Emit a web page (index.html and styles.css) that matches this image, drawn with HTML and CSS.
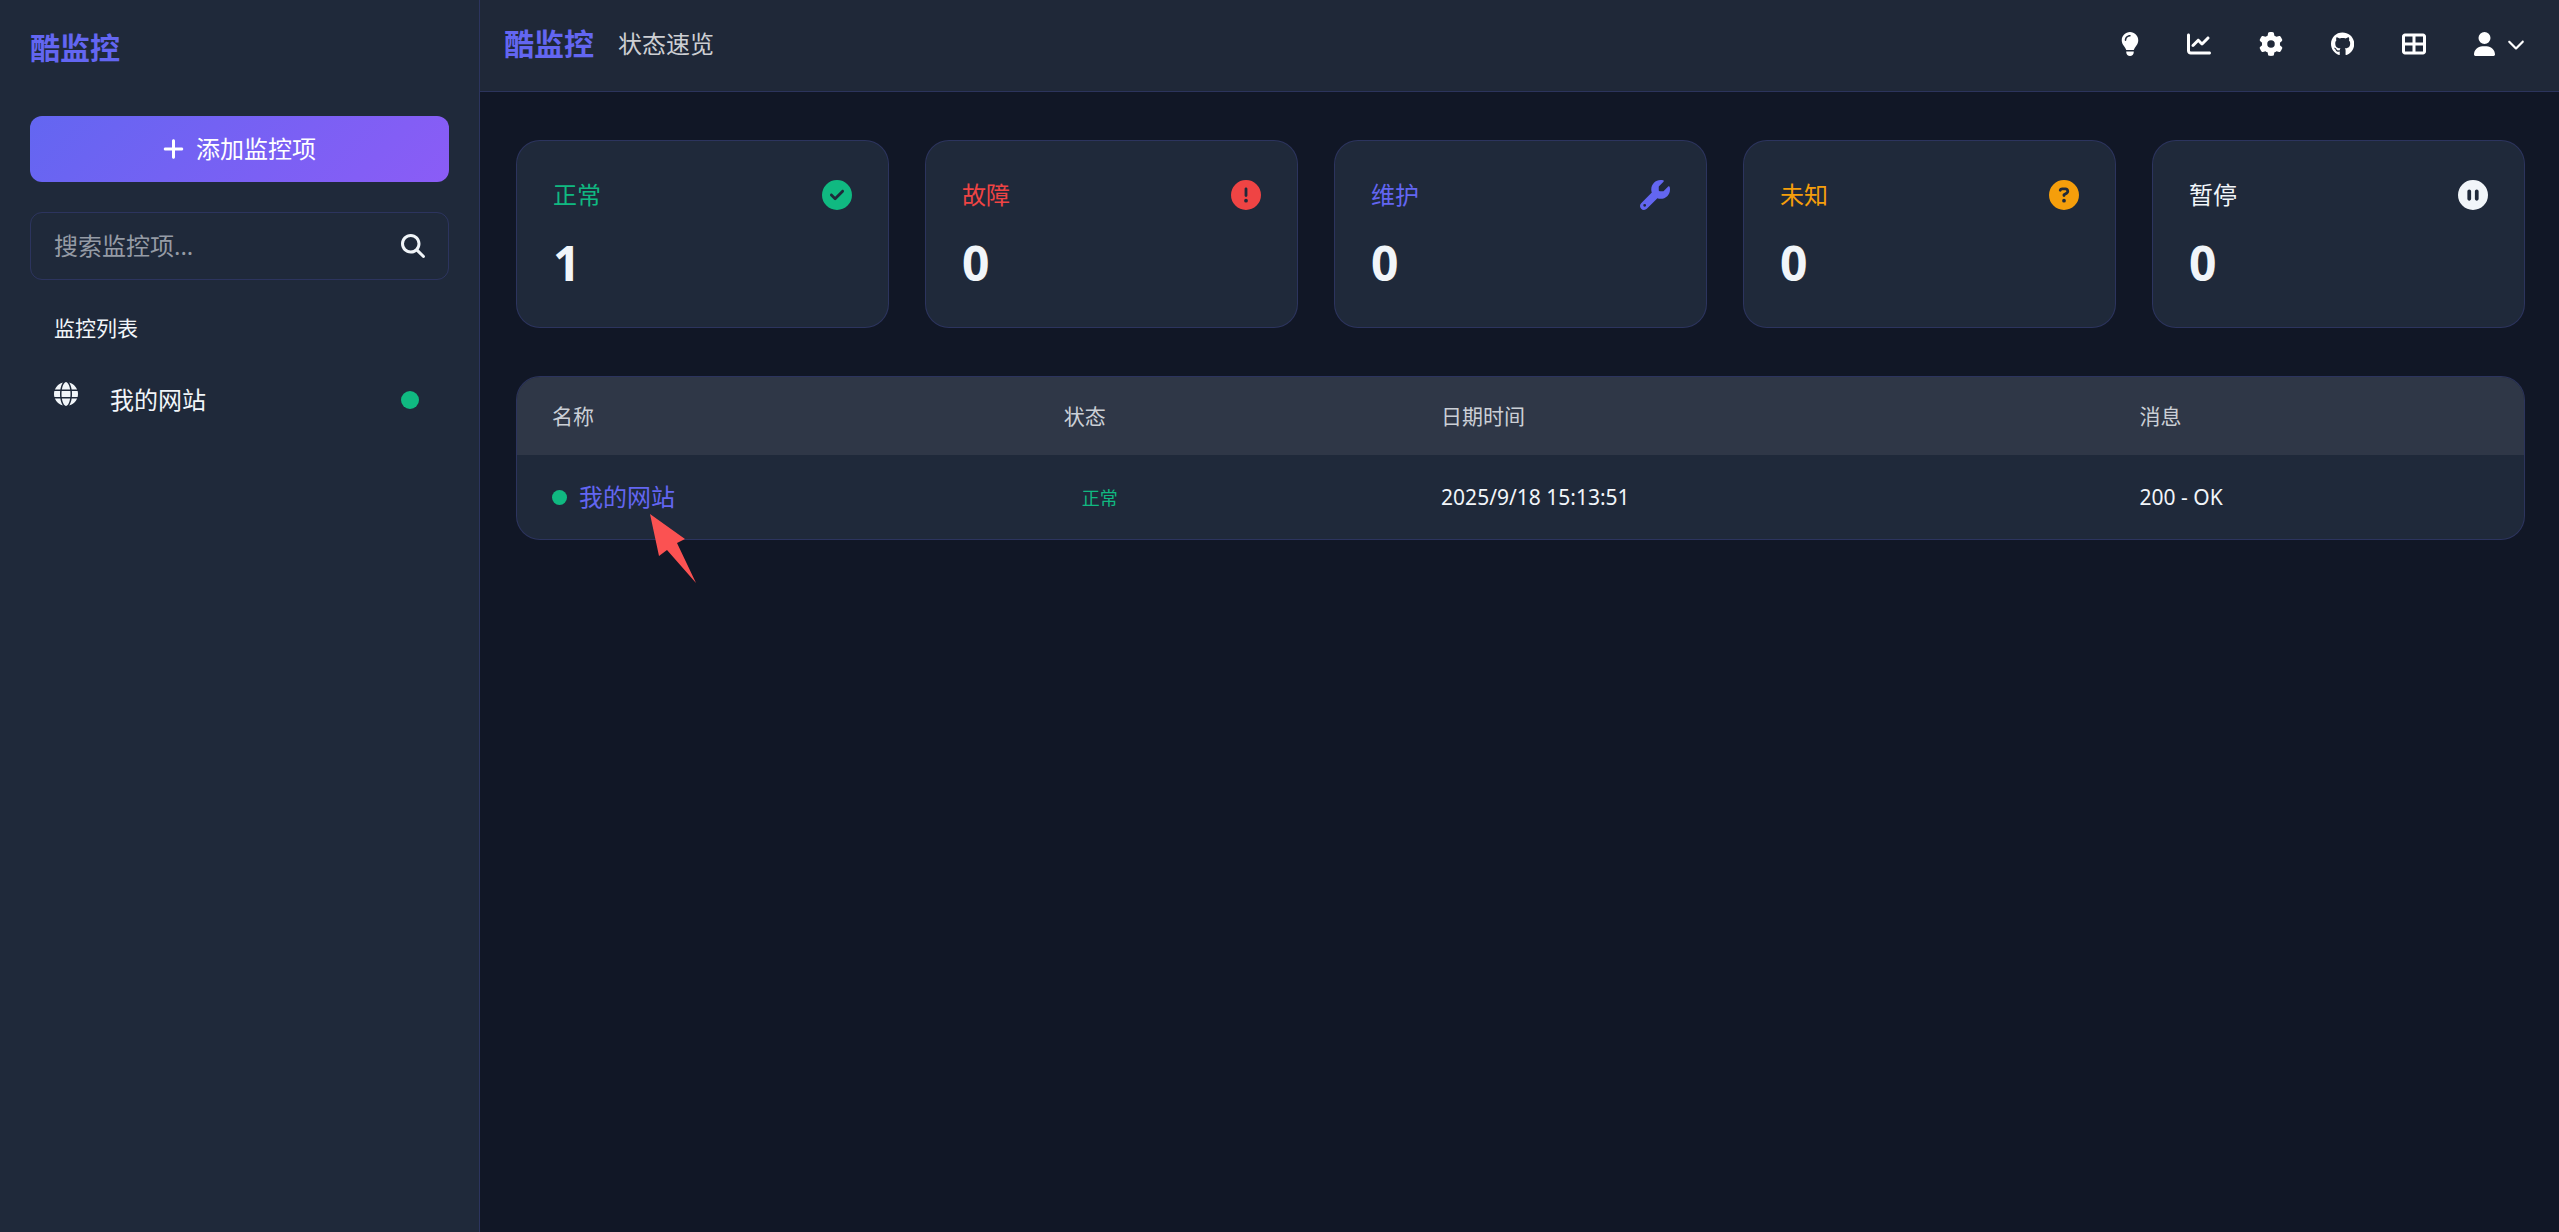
FILE: index.html
```html
<!DOCTYPE html>
<html lang="zh-CN">
<head>
<meta charset="utf-8">
<title>酷监控 - 状态速览</title>
<meta name="viewport" content="width=device-width, initial-scale=1">
<link rel="stylesheet" href="styles.css">
</head>
<body>
<div class="app">
  <aside class="sidebar">
    <a class="brand" href="#">酷监控</a>
    <button class="add-button" type="button">
      <svg class="icon icon-plus" viewBox="0 0 448 512" aria-hidden="true"><path d="M256 80c0-17.7-14.3-32-32-32s-32 14.3-32 32V224H48c-17.7 0-32 14.3-32 32s14.3 32 32 32H192V432c0 17.7 14.3 32 32 32s32-14.3 32-32V288H400c17.7 0 32-14.3 32-32s-14.3-32-32-32H256V80z"/></svg>
      <span>添加监控项</span>
    </button>
    <form class="search" role="search">
      <input class="search-input" type="text" placeholder="搜索监控项..." aria-label="搜索监控项">
      <button class="search-button" type="button" aria-label="搜索">
        <svg class="icon" viewBox="0 0 512 512" aria-hidden="true"><path d="M416 208c0 45.9-14.9 88.3-40 122.7L502.6 457.4c12.5 12.5 12.5 32.8 0 45.3s-32.8 12.5-45.3 0L330.7 376c-34.4 25.2-76.8 40-122.7 40C93.1 416 0 322.9 0 208S93.1 0 208 0S416 93.1 416 208zM208 352a144 144 0 1 0 0-288 144 144 0 1 0 0 288z"/></svg>
      </button>
    </form>
    <h2 class="list-title">监控列表</h2>
    <nav>
      <a class="monitor" href="#">
        <svg class="icon monitor-icon" viewBox="0 0 512 512" aria-hidden="true"><path d="M352 256c0 22.2-1.2 43.6-3.3 64H163.3c-2.2-20.4-3.3-41.8-3.3-64s1.2-43.6 3.3-64H348.7c2.2 20.4 3.3 41.8 3.3 64zm28.8-64H503.9c5.3 20.5 8.1 41.9 8.1 64s-2.8 43.5-8.1 64H380.8c2.1-20.6 3.2-42 3.2-64s-1.1-43.4-3.2-64zm112.6-32H376.7c-10-63.9-29.8-117.4-55.3-151.6c78.3 20.7 142 77.5 171.9 151.6zm-149.1 0H167.7c6.1-36.4 15.5-68.6 27-94.7c10.5-23.6 22.2-40.7 33.5-51.5C239.4 3.2 248.7 0 256 0s16.6 3.2 27.8 13.8c11.3 10.8 23 27.9 33.5 51.5c11.6 26 20.9 58.2 27 94.7zm-209 0H18.6C48.6 85.9 112.2 29.1 190.6 8.4C165.1 42.6 145.3 96.1 135.3 160zM8.1 192H131.2c-2.1 20.6-3.2 42-3.2 64s1.1 43.4 3.2 64H8.1C2.8 299.5 0 278.1 0 256s2.8-43.5 8.1-64zM194.7 446.6c-11.6-26-20.9-58.2-27-94.6H344.3c-6.1 36.4-15.5 68.6-27 94.6c-10.5 23.6-22.2 40.7-33.5 51.5C272.6 508.8 263.3 512 256 512s-16.6-3.2-27.8-13.8c-11.3-10.8-23-27.9-33.5-51.5zM135.3 352c10 63.9 29.8 117.4 55.3 151.6C112.2 482.9 48.6 426.1 18.6 352H135.3zm358.1 0c-30 74.1-93.6 130.9-171.9 151.6c25.5-34.2 45.2-87.7 55.3-151.6H493.4z"/></svg>
        <span class="monitor-name">我的网站</span>
        <span class="dot dot-large"></span>
      </a>
    </nav>
  </aside>

  <div class="page">
    <header class="topbar">
      <a class="brand" href="#">酷监控</a>
      <h1 class="page-title">状态速览</h1>
      <nav class="tools">
        <button class="tool" type="button" aria-label="切换主题"><svg class="icon" viewBox="0 0 384 512" aria-hidden="true"><path d="M272 384c9.6-31.9 29.5-59.1 49.2-86.2l0 0c5.2-7.1 10.4-14.2 15.4-21.4c19.8-28.5 31.4-63 31.4-100.3C368 78.8 289.2 0 192 0S16 78.8 16 176c0 37.3 11.6 71.9 31.4 100.3c5 7.2 10.2 14.3 15.4 21.4l0 0c19.8 27.1 39.7 54.4 49.2 86.2H272zM192 512c44.2 0 80-35.8 80-80V416H112v16c0 44.2 35.8 80 80 80zM112 176c0 8.8-7.2 16-16 16s-16-7.2-16-16c0-61.9 50.1-112 112-112c8.8 0 16 7.2 16 16s-7.2 16-16 16c-44.2 0-80 35.8-80 80z"/></svg></button>
        <a class="tool" href="#" aria-label="状态页"><svg class="icon" viewBox="0 0 512 512" aria-hidden="true"><path d="M64 64c0-17.7-14.3-32-32-32S0 46.3 0 64V400c0 44.2 35.8 80 80 80H480c17.7 0 32-14.3 32-32s-14.3-32-32-32H80c-8.8 0-16-7.2-16-16V64zm406.6 86.6c12.5-12.5 12.5-32.8 0-45.3s-32.8-12.5-45.3 0L320 210.7l-57.4-57.4c-12.5-12.5-32.8-12.5-45.3 0l-112 112c-12.5 12.5-12.5 32.8 0 45.3s32.8 12.5 45.3 0L240 221.3l57.4 57.4c12.5 12.5 32.8 12.5 45.3 0l128-128z"/></svg></a>
        <a class="tool" href="#" aria-label="设置"><svg class="icon" viewBox="0 0 512 512" aria-hidden="true"><path d="M495.9 166.6c3.2 8.7 .5 18.4-6.4 24.6l-43.3 39.4c1.1 8.3 1.7 16.8 1.7 25.4s-.6 17.1-1.7 25.4l43.3 39.4c6.9 6.2 9.6 15.9 6.4 24.6c-4.4 11.9-9.7 23.3-15.8 34.3l-4.7 8.1c-6.6 11-14 21.4-22.1 31.2c-5.9 7.2-15.7 9.6-24.5 6.8l-55.7-17.7c-13.4 10.3-28.2 18.9-44 25.4l-12.5 57.1c-2 9.1-9 16.3-18.2 17.8c-13.8 2.3-28 3.5-42.5 3.5s-28.7-1.2-42.5-3.5c-9.2-1.5-16.2-8.7-18.2-17.8l-12.5-57.1c-15.8-6.5-30.6-15.1-44-25.4L83.1 425.9c-8.8 2.8-18.6 .3-24.5-6.8c-8.1-9.8-15.5-20.2-22.1-31.2l-4.7-8.1c-6.1-11-11.4-22.4-15.8-34.3c-3.2-8.7-.5-18.4 6.4-24.6l43.3-39.4C64.6 273.1 64 264.6 64 256s.6-17.1 1.7-25.4L22.4 191.2c-6.9-6.2-9.6-15.9-6.4-24.6c4.4-11.9 9.7-23.3 15.8-34.3l4.7-8.1c6.6-11 14-21.4 22.1-31.2c5.9-7.2 15.7-9.6 24.5-6.8l55.7 17.7c13.4-10.3 28.2-18.9 44-25.4l12.5-57.1c2-9.1 9-16.3 18.2-17.8C227.3 1.2 241.5 0 256 0s28.7 1.2 42.5 3.5c9.2 1.5 16.2 8.7 18.2 17.8l12.5 57.1c15.8 6.5 30.6 15.1 44 25.4l55.7-17.7c8.8-2.8 18.6-.3 24.5 6.8c8.1 9.8 15.5 20.2 22.1 31.2l4.7 8.1c6.1 11 11.4 22.4 15.8 34.3zM256 336a80 80 0 1 0 0-160 80 80 0 1 0 0 160z"/></svg></a>
        <a class="tool" href="#" aria-label="GitHub"><svg class="icon" viewBox="0 0 496 512" aria-hidden="true"><path d="M165.9 397.4c0 2-2.3 3.6-5.2 3.6-3.3.3-5.6-1.3-5.6-3.6 0-2 2.3-3.6 5.2-3.6 3-.3 5.6 1.3 5.6 3.6zm-31.1-4.5c-.7 2 1.3 4.3 4.3 4.9 2.6 1 5.6 0 6.2-2s-1.3-4.3-4.3-5.2c-2.6-.7-5.5.3-6.2 2.3zm44.2-1.7c-2.9.7-4.9 2.6-4.6 4.9.3 2 2.9 3.3 5.9 2.6 2.9-.7 4.9-2.6 4.6-4.6-.3-1.9-3-3.2-5.9-2.9zM244.8 8C106.1 8 0 113.3 0 252c0 110.9 69.8 205.8 169.5 239.2 12.8 2.3 17.3-5.6 17.3-12.1 0-6.2-.3-40.4-.3-61.4 0 0-70 15-84.7-29.8 0 0-11.4-29.1-27.8-36.6 0 0-22.9-15.7 1.6-15.4 0 0 24.9 2 38.6 25.8 21.9 38.6 58.6 27.5 72.9 20.9 2.3-16 8.8-27.1 16-33.7-55.9-6.2-112.3-14.3-112.3-110.5 0-27.5 7.6-41.3 23.6-58.9-2.6-6.5-11.1-33.3 2.6-67.9 20.9-6.5 69 27 69 27 20-5.6 41.5-8.5 62.8-8.5s42.8 2.9 62.8 8.5c0 0 48.1-33.6 69-27 13.7 34.7 5.2 61.4 2.6 67.9 16 17.7 25.8 31.5 25.8 58.9 0 96.5-58.9 104.2-114.8 110.5 9.2 7.9 17 22.9 17 46.4 0 33.7-.3 75.4-.3 83.6 0 6.5 4.6 14.4 17.3 12.1C428.2 457.8 496 362.9 496 252 496 113.3 383.5 8 244.8 8z"/></svg></a>
        <a class="tool" href="#" aria-label="面板"><svg class="icon" viewBox="0 0 512 512" aria-hidden="true"><path d="M448 96V224H288V96H448zm0 192V416H288V288H448zM224 224H64V96H224V224zM64 288H224V416H64V288zM64 32C28.7 32 0 60.7 0 96V416c0 35.3 28.7 64 64 64H448c35.3 0 64-28.7 64-64V96c0-35.3-28.7-64-64-64H64z"/></svg></a>
        <button class="tool tool-user" type="button" aria-label="用户菜单">
          <svg class="icon icon-user" viewBox="0 0 448 512" aria-hidden="true"><path d="M224 256A128 128 0 1 0 224 0a128 128 0 1 0 0 256zm-45.7 48C79.8 304 0 383.8 0 482.3C0 498.7 13.3 512 29.7 512H418.3c16.4 0 29.7-13.3 29.7-29.7C448 383.8 368.2 304 269.7 304H178.3z"/></svg>
          <svg class="icon icon-chevron" viewBox="0 0 512 512" aria-hidden="true"><path d="M233.4 406.6c12.5 12.5 32.8 12.5 45.3 0l192-192c12.5-12.5 12.5-32.8 0-45.3s-32.8-12.5-45.3 0L256 338.7 86.6 169.4c-12.5-12.5-32.8-12.5-45.3 0s-12.5 32.8 0 45.3l192 192z"/></svg>
        </button>
      </nav>
    </header>

    <main class="content">
      <section class="stats">
        <article class="card">
          <div class="card-head up">
            <span>正常</span>
            <svg class="icon card-icon" viewBox="0 0 512 512" aria-hidden="true"><path d="M256 512A256 256 0 1 0 256 0a256 256 0 1 0 0 512zM369 209L241 337c-9.4 9.4-24.6 9.4-33.9 0l-64-64c-9.4-9.4-9.4-24.6 0-33.9s24.6-9.4 33.9 0l47 47L335 175c9.4-9.4 24.6-9.4 33.9 0s9.4 24.6 0 33.9z"/></svg>
          </div>
          <div class="card-value">1</div>
        </article>
        <article class="card">
          <div class="card-head down">
            <span>故障</span>
            <svg class="icon card-icon" viewBox="0 0 512 512" aria-hidden="true"><path d="M256 512A256 256 0 1 0 256 0a256 256 0 1 0 0 512zm0-384c13.3 0 24 10.7 24 24V264c0 13.3-10.7 24-24 24s-24-10.7-24-24V152c0-13.3 10.7-24 24-24zM224 352a32 32 0 1 1 64 0 32 32 0 1 1 -64 0z"/></svg>
          </div>
          <div class="card-value">0</div>
        </article>
        <article class="card">
          <div class="card-head maintenance">
            <span>维护</span>
            <svg class="icon card-icon" viewBox="0 0 512 512" aria-hidden="true"><path d="M352 320c88.4 0 160-71.6 160-160c0-15.3-2.2-30.1-6.2-44.2c-3.1-10.8-16.4-13.2-24.3-5.3l-76.8 76.8c-3 3-7.1 4.7-11.3 4.7H336c-8.8 0-16-7.2-16-16V118.6c0-4.2 1.7-8.3 4.7-11.3l76.8-76.8c7.9-7.9 5.4-21.2-5.3-24.3C382.1 2.2 367.3 0 352 0C263.6 0 192 71.6 192 160c0 19.1 3.4 37.5 9.5 54.5L19.9 396.1C7.2 408.8 0 426.1 0 444.1C0 481.6 30.4 512 67.9 512c18 0 35.3-7.2 48-19.9L297.5 310.5c17 6.2 35.4 9.5 54.5 9.5zM80 408a24 24 0 1 1 0 48 24 24 0 1 1 0-48z"/></svg>
          </div>
          <div class="card-value">0</div>
        </article>
        <article class="card">
          <div class="card-head unknown">
            <span>未知</span>
            <svg class="icon card-icon" viewBox="0 0 512 512" aria-hidden="true"><path d="M256 512A256 256 0 1 0 256 0a256 256 0 1 0 0 512zM169.8 165.3c7.9-22.3 29.1-37.3 52.8-37.3h58.3c34.9 0 63.1 28.3 63.1 63.1c0 22.6-12.1 43.5-31.7 54.8L280 264.4c-.2 13-10.9 23.6-24 23.6c-13.3 0-24-10.7-24-24V250.5c0-8.6 4.6-16.5 12.1-20.8l44.3-25.4c4.7-2.7 7.6-7.7 7.6-13.1c0-8.4-6.8-15.1-15.1-15.1H222.6c-3.4 0-6.4 2.1-7.5 5.3l-.4 1.2c-4.4 12.5-18.2 19-30.6 14.6s-19-18.2-14.6-30.6l.4-1.2zM224 352a32 32 0 1 1 64 0 32 32 0 1 1 -64 0z"/></svg>
          </div>
          <div class="card-value">0</div>
        </article>
        <article class="card">
          <div class="card-head">
            <span>暂停</span>
            <svg class="icon card-icon" viewBox="0 0 512 512" aria-hidden="true"><path d="M256 512A256 256 0 1 0 256 0a256 256 0 1 0 0 512zM224 192V320c0 17.7-14.3 32-32 32s-32-14.3-32-32V192c0-17.7 14.3-32 32-32s32 14.3 32 32zm128 0V320c0 17.7-14.3 32-32 32s-32-14.3-32-32V192c0-17.7 14.3-32 32-32s32 14.3 32 32z"/></svg>
          </div>
          <div class="card-value">0</div>
        </article>
      </section>

      <section class="events">
        <table class="events-table">
          <thead>
            <tr>
              <th class="col-name" scope="col">名称</th>
              <th class="col-status" scope="col">状态</th>
              <th class="col-time" scope="col">日期时间</th>
              <th scope="col">消息</th>
            </tr>
          </thead>
          <tbody>
            <tr>
              <td>
                <div class="event-name">
                  <span class="dot"></span>
                  <a class="event-link" href="#">我的网站</a>
                </div>
              </td>
              <td><span class="badge">正常</span></td>
              <td>2025/9/18 15:13:51</td>
              <td>200 - OK</td>
            </tr>
          </tbody>
        </table>
        <svg class="pointer" viewBox="0 0 46 69" aria-hidden="true"><path d="M0 0L35 25L27 29L46 69L17 36L9 42Z"/></svg>
      </section>
    </main>
  </div>
</div>
</body>
</html>
```
FILE: styles.css
```css
:root {
  --primary: #6366f1;
  --green: #10b981;
  --red: #ef4444;
  --amber: #f59e0b;
  --text: #f1f5f9;
  --muted: #cbcfd6;
  --surface: #1f293a;
  --line: rgba(99, 102, 241, 0.2);
}

* {
  box-sizing: border-box;
}

body {
  margin: 0;
  background: #111726;
  color: var(--text);
  font: 24px/36px "Noto Sans", "Noto Sans CJK SC", sans-serif;
}

a {
  color: inherit;
  text-decoration: none;
}

button {
  padding: 0;
  border: 0;
  background: none;
  color: inherit;
  font: inherit;
  cursor: pointer;
}

.icon {
  display: block;
  flex: none;
  height: 24px;
  fill: currentColor;
}

.app {
  display: grid;
  grid-template-columns: 480px minmax(0, 1fr);
  min-height: 100vh;
}

/* Sidebar */
.sidebar {
  display: flex;
  flex-direction: column;
  padding: 26px 30px;
  border-right: 1px solid var(--line);
  background: var(--surface);
}

.brand {
  color: var(--primary);
  font-size: 30px;
  font-weight: 700;
  line-height: 44px;
}

.add-button {
  display: flex;
  align-items: center;
  justify-content: center;
  gap: 12px;
  height: 66px;
  margin-top: 46px;
  border-radius: 12px;
  background: linear-gradient(135deg, #6366f1, #8b5cf6);
  color: #fff;
}

.search {
  display: flex;
  align-items: center;
  height: 68px;
  margin-top: 30px;
  padding: 0 23px;
  border: 1px solid var(--line);
  border-radius: 12px;
}

.search-input {
  flex: 1;
  min-width: 0;
  padding: 0;
  border: 0;
  outline: 0;
  background: none;
  color: var(--text);
  font: inherit;
}

.search-input::placeholder {
  color: #959ba5;
  opacity: 1;
}

.list-title {
  margin: 30px 24px 0;
  font-size: 21px;
  font-weight: 400;
}

.monitor {
  display: flex;
  align-items: center;
  margin-top: 36px;
  padding: 0 30px 0 24px;
}

.monitor-icon {
  margin-bottom: 12px;
}

.monitor-name {
  flex: 1;
  margin-left: 32px;
}

.dot {
  flex: none;
  width: 15px;
  height: 15px;
  border-radius: 50%;
  background: var(--green);
}

.dot-large {
  width: 18px;
  height: 18px;
}

/* Top bar */
.topbar {
  display: flex;
  align-items: center;
  gap: 24px;
  padding: 22px 34px 25px 24px;
  border-bottom: 1px solid var(--line);
  background: #1f2838;
}

.page-title {
  margin: 0;
  color: #cdcfd3;
  font-size: 24px;
  font-weight: 400;
}

.tools {
  display: flex;
  gap: 48px;
  margin-left: auto;
  color: #fff;
}

.tool {
  display: flex;
  align-items: center;
  height: 36px;
}

.tool-user {
  gap: 12px;
}

.icon-chevron {
  height: 18px;
}

/* Content */
.content {
  padding: 48px 34px 48px 36px;
}

.stats {
  display: grid;
  grid-template-columns: repeat(5, minmax(0, 1fr));
  gap: 36px;
}

.card {
  padding: 36px 36px 34px;
  border: 1px solid var(--line);
  border-radius: 24px;
  background: var(--surface);
}

.card-head {
  display: flex;
  align-items: center;
  justify-content: space-between;
  height: 36px;
}

.card-icon {
  height: 30px;
}

.card-value {
  margin-top: 20px;
  font-size: 48px;
  font-weight: 700;
  line-height: 60px;
}

.up { color: var(--green); }
.down { color: var(--red); }
.maintenance { color: var(--primary); }
.unknown { color: var(--amber); }

.events {
  position: relative;
  margin-top: 48px;
  border: 1px solid var(--line);
  border-radius: 24px;
  background: var(--surface);
}

.events-table {
  width: 100%;
  border-collapse: separate;
  border-spacing: 0;
  table-layout: fixed;
  font-size: 21px;
}

.events-table th {
  height: 78px;
  padding: 0 35px;
  background: #2f3747;
  color: var(--muted);
  font-weight: 400;
  text-align: left;
}

.events-table th:first-child { border-top-left-radius: 23px; }
.events-table th:last-child { border-top-right-radius: 23px; }

.col-name { width: 25.5%; }
.col-status { width: 18.8%; }
.col-time { width: 34.8%; }

.events-table td {
  height: 84px;
  padding: 0 35px;
}

.event-name {
  display: flex;
  align-items: center;
  gap: 12px;
}

.event-link {
  color: var(--primary);
  font-size: 24px;
}

.badge {
  padding: 0 18px;
  color: var(--green);
  font-size: 18px;
}

.pointer {
  position: absolute;
  top: 137px;
  left: 133px;
  width: 46px;
  height: 69px;
  fill: #fb5252;
}
```
